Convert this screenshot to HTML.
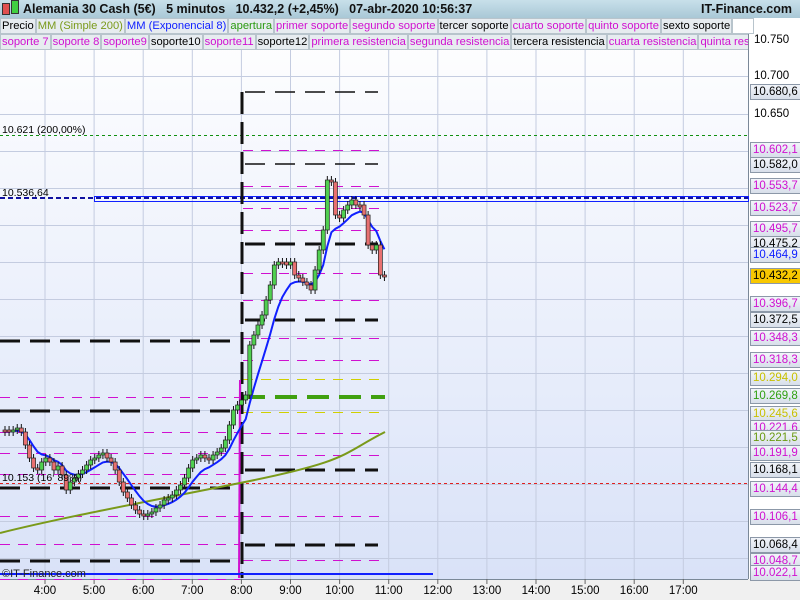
<!DOCTYPE html>
<html><head><meta charset="utf-8"><style>
body{margin:0;width:800px;height:600px;overflow:hidden;font-family:"Liberation Sans",sans-serif;background:#fff;position:relative}
#hdr{position:absolute;left:0;top:0;width:800px;height:18px;background:linear-gradient(#c8e0ea,#a9c8d6);font-size:12.5px;font-weight:bold;line-height:18px;color:#111}
.leg{position:absolute;left:0;height:16px;font-size:11.2px;line-height:15px;white-space:nowrap;display:flex}
.leg span{background:#e7ecf0;border:1px solid #b8c4cc;padding:0 1px;margin-right:0}
.ax{position:absolute;left:750px;font-size:11.5px;height:14px;line-height:14px;padding:0 2px;border:1px solid #8c98a8;background:linear-gradient(#f2f5fa,#d8dfea);color:#000}
.tk{position:absolute;left:754px;font-size:11.5px;line-height:14px}
.tm{position:absolute;top:585px;font-size:11.5px;width:40px;text-align:center}
</style></head><body>
<svg width="800" height="600" style="position:absolute;left:0;top:0">
<defs><linearGradient id="bg" x1="0" y1="0" x2="0" y2="1"><stop offset="0" stop-color="#ffffff"/><stop offset="1" stop-color="#d9e2f8"/></linearGradient></defs>
<rect x="0" y="18" width="748" height="561" fill="url(#bg)"/>
<rect x="0" y="579" width="800" height="21" fill="#f0f0f0"/>
<line x1="748.5" y1="18" x2="748.5" y2="579" stroke="#7a8898"/>
<line x1="0" y1="579.5" x2="748" y2="579.5" stroke="#7a8898"/>
<g id="grid" stroke="#c4cce0" stroke-width="1"></g>
<g id="lines"></g>
<g id="cnd"></g>
</svg>
<div id="hdr"><span style="position:absolute;left:2px;top:3px;width:6px;height:10px;background:#e05050;border:1px solid #333"></span><span style="position:absolute;left:11px;top:0px;width:6px;height:12px;background:#40d040;border:1px solid #333"></span><span style="position:absolute;left:23px">Alemania 30 Cash (5€)&nbsp;&nbsp; 5 minutos&nbsp;&nbsp; 10.432,2 (+2,45%)&nbsp;&nbsp; 07-abr-2020 10:56:37</span><span style="position:absolute;right:8px">IT-Finance.com</span></div>
<div class="leg" style="top:18px"><span>Precio</span><span style="color:#7a9a1a">MM (Simple 200)</span><span style="color:#1020ff">MM (Exponencial 8)</span><span style="color:#2a9a10">apertura</span><span style="color:#d010d0">primer soporte</span><span style="color:#d010d0">segundo soporte</span><span>tercer soporte</span><span style="color:#d010d0">cuarto soporte</span><span style="color:#d010d0">quinto soporte</span><span>sexto soporte</span><span style="width:18px;background:#fff"></span></div>
<div class="leg" style="top:34px;width:748px;overflow:hidden"><span style="color:#d010d0">soporte 7</span><span style="color:#d010d0">soporte 8</span><span style="color:#d010d0">soporte9</span><span>soporte10</span><span style="color:#d010d0">soporte11</span><span>soporte12</span><span style="color:#d010d0">primera resistencia</span><span style="color:#d010d0">segunda resistencia</span><span>tercera resistencia</span><span style="color:#d010d0">cuarta resistencia</span><span style="color:#d010d0">quinta resistencia</span></div>
<div style="position:absolute;left:2px;top:124px;font-size:10.5px">10.621 (200,00%)</div>
<div style="position:absolute;left:2px;top:187px;font-size:10.5px">10.536,64</div>
<div style="position:absolute;left:2px;top:472px;font-size:10.5px">10.153 (16‘ 89%)</div>
<div style="position:absolute;left:2px;top:568px;font-size:11px;color:#222">©IT-Finance.com</div>
<div id="axis"></div>
<div id="times"></div>
<script>
var NS="http://www.w3.org/2000/svg";
function el(p,t,a){var e=document.createElementNS(NS,t);for(var k in a)e.setAttribute(k,a[k]);p.appendChild(e);return e;}
var g=document.getElementById('grid'),L=document.getElementById('lines'),C=document.getElementById('cnd');
for(var h=0;h<14;h++){var x=45+h*49.1;el(g,'line',{x1:x,y1:50,x2:x,y2:579});el(g,'line',{x1:x,y1:579,x2:x,y2:584,stroke:'#666'});}
[40,76,114,151,188,225,262,299,336,373,410,447,484,521,558].forEach(function(y){el(g,'line',{x1:0,y1:y+.5,x2:748,y2:y+.5});});
function hl(y,x1,x2,c,w,da){el(L,'line',{x1:x1,y1:y,x2:x2,y2:y,stroke:c,'stroke-width':w,'stroke-dasharray':da||''});}
hl(135.5,0,748,'#109010',1,'3,3');
hl(483.5,0,748,'#e02020',1,'3,3');
hl(198,0,748,'#1010a0',2,'5,3');
el(L,'rect',{x:94.5,y:196.5,width:654,height:5,fill:'none',stroke:'#1020ff','stroke-width':1});
[150,186,208,230,273,300,338,360,433,455,516,560].forEach(function(y){hl(y+.5,243,385,'#d010d0',1,'10,8');});
[397,432,453,474,516,544,579].forEach(function(y){hl(y+.5,0,240,'#d010d0',1,'10,8');});
hl(379.5,243,385,'#d0d000',1,'10,8');hl(412.5,243,385,'#d0d000',1,'10,8');
hl(397,243,385,'#40a010',4,'22,10');
[[92,1.5],[164,1.5],[244,3],[320,3],[470,3],[545,3]].forEach(function(a){hl(a[0],245,378,'#111',a[1],'20,10');});
[341,411,488,561].forEach(function(y){hl(y,0,240,'#111',3,'20,10');});
el(L,'path',{d:'M242,92 L242,578',stroke:'#111','stroke-width':3,'stroke-dasharray':'22,8',fill:'none'});
el(L,'path',{d:'M240,380 L239,578',stroke:'#d010d0','stroke-width':2,fill:'none'});
hl(574,0,433,'#1020ff',2);
el(L,'path',{d:'M0,533 C60,518 130,505 240,483 S340,455 385,432',stroke:'#7a9a1a','stroke-width':2,fill:'none'});
var ys=[430,432,430,428,432,445,458,468,470,462,458,462,470,466,475,490,482,478,474,470,465,460,458,455,453,458,462,470,482,492,498,505,510,514,516,514,512,508,505,500,498,495,490,485,478,468,460,458,455,458,460,455,452,448,440,425,410,405,400,
395,345,335,325,315,300,285,265,262,262,265,262,275,278,282,285,290,270,250,230,180,182,215,218,210,205,200,205,205,215,245,250,245,275,277];
var ema=[],k=2/9,x0=3,dx=4.08,prev=430;
ys.forEach(function(c,i){var o=prev,x=x0+i*dx;var top=Math.min(o,c),bot=Math.max(o,c);if(bot-top<2)bot=top+2;
el(C,'line',{x1:x+2,y1:top-4,x2:x+2,y2:bot+4,stroke:'#111','stroke-width':1});
el(C,'rect',{x:x,y:top,width:4,height:bot-top,fill:c<o?'#50d050':'#e87070',stroke:'#222','stroke-width':.7});
prev=c;ema.push(i?ema[i-1]+k*(c-ema[i-1]):c);});
var d='';ema.forEach(function(v,i){d+=(i?'L':'M')+(x0+2+i*dx).toFixed(1)+','+(v+1).toFixed(1);});
el(L,'path',{d:d,stroke:'#1020ff','stroke-width':2,fill:'none'});
var ax=document.getElementById('axis'),H='';
[[40,'10.750'],[76,'10.700'],[114,'10.650']].forEach(function(a){H+='<div class="tk" style="top:'+(a[0]-7)+'px">'+a[1]+'</div>';});
[[92,'10.680,6','#000'],[150,'10.602,1','#d010d0'],[165,'10.582,0','#000'],[186,'10.553,7','#d010d0'],[208,'10.523,7','#d010d0'],[229,'10.495,7','#d010d0'],[244,'10.475,2','#000'],[255,'10.464,9','#1020ff'],[276,'10.432,2','#000','#f8c800'],[304,'10.396,7','#d010d0'],[320,'10.372,5','#000'],[338,'10.348,3','#d010d0'],[360,'10.318,3','#d010d0'],[378,'10.294,0','#c8c000'],[396,'10.269,8','#30a010'],[414,'10.245,6','#c8c000'],[428,'10.221,6','#d010d0'],[438,'10.221,5','#6a9a10'],[453,'10.191,9','#d010d0'],[470,'10.168,1','#000'],[489,'10.144,4','#d010d0'],[517,'10.106,1','#d010d0'],[545,'10.068,4','#000'],[561,'10.048,7','#d010d0'],[573,'10.022,1','#d010d0']].forEach(function(a){
H+='<div class="ax" style="top:'+(a[0]-8)+'px;color:'+a[2]+(a[3]?';background:'+a[3]:'')+'">'+a[1]+'</div>';});
ax.innerHTML=H;
var T='';['4:00','5:00','6:00','7:00','8:00','9:00','10:00','11:00','12:00','13:00','14:00','15:00','16:00','17:00'].forEach(function(t,i){T+='<div class="tm" style="left:'+(25+i*49.1)+'px">'+t+'</div>';});
document.getElementById('times').innerHTML=T;
</script>
</body></html>
